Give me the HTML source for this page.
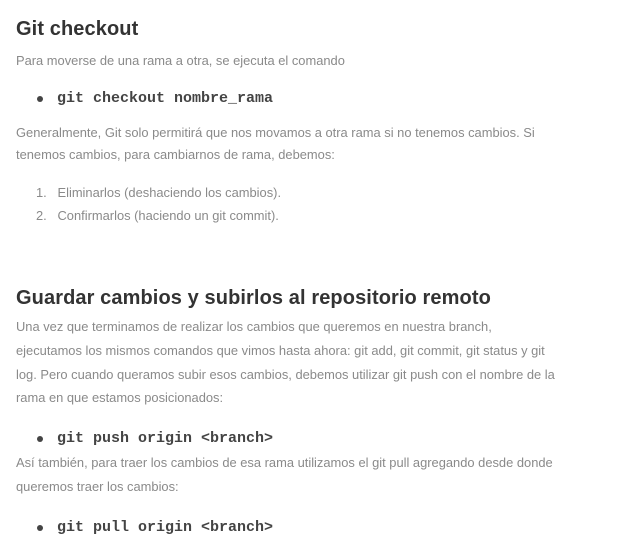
<html><head><style>
body{margin:0;width:635px;height:541px;background:#fff;position:relative;font-family:"Liberation Sans",sans-serif;overflow:hidden}
div{position:absolute;white-space:nowrap;line-height:20px}
.h{font-weight:bold;color:#333;font-size:20px;left:16px;line-height:24px;letter-spacing:0.1px}
.t{font-size:12.9px;color:#8a8a8a;left:16px;}
.c{font-family:"Liberation Mono",monospace;font-weight:bold;font-size:15px;color:#444;left:57px}
.b{left:37px;width:6px;height:6px;border-radius:50%;background:#444}
.n{font-size:12.9px;color:#8a8a8a;left:36px}
</style></head><body>
<div class="h" style="top:17px">Git checkout</div>
<div class="t" style="top:51px">Para moverse de una rama a otra, se ejecuta el comando</div>
<div class="b" style="top:96px"></div><div class="c" style="top:89px">git checkout nombre_rama</div>
<div class="t" style="top:123px">Generalmente, Git solo permitirá que nos movamos a otra rama si no tenemos cambios. Si</div>
<div class="t" style="top:145px">tenemos cambios, para cambiarnos de rama, debemos:</div>
<div class="n" style="top:183px">1.&nbsp;&nbsp;&nbsp;Eliminarlos (deshaciendo los cambios).</div>
<div class="n" style="top:206px">2.&nbsp;&nbsp;&nbsp;Confirmarlos (haciendo un git commit).</div>
<div class="h" style="top:286px">Guardar cambios y subirlos al repositorio remoto</div>
<div class="t" style="top:317px">Una vez que terminamos de realizar los cambios que queremos en nuestra branch,</div>
<div class="t" style="top:341px">ejecutamos los mismos comandos que vimos hasta ahora: git add, git commit, git status y git</div>
<div class="t" style="top:365px">log. Pero cuando queramos subir esos cambios, debemos utilizar git push con el nombre de la</div>
<div class="t" style="top:388px">rama en que estamos posicionados:</div>
<div class="b" style="top:436px"></div><div class="c" style="top:429px">git push origin &lt;branch&gt;</div>
<div class="t" style="top:453px">Así también, para traer los cambios de esa rama utilizamos el git pull agregando desde donde</div>
<div class="t" style="top:477px">queremos traer los cambios:</div>
<div class="b" style="top:525px"></div><div class="c" style="top:518px">git pull origin &lt;branch&gt;</div>
</body></html>
